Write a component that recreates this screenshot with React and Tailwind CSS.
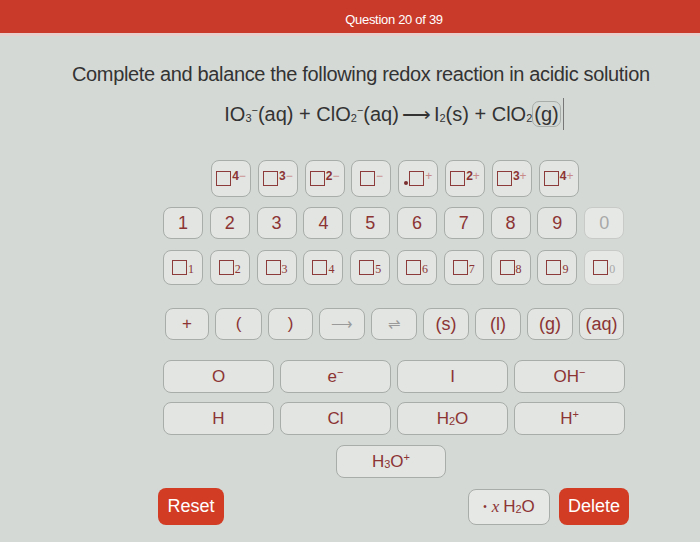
import React from 'react';

const maroon = 'text-[#8c3434]';

// outlined placeholder square used in the charge and subscript keys
function Box() {
  return <span className="inline-block w-[15px] h-[15px] border-[1.5px] border-[#8c3a3a] align-middle" />;
}

function Key({ className = '', children }) {
  return (
    <div
      className={`flex items-center justify-center rounded-[8px] border border-[#a9adaa] bg-[#e2e5e2] ${maroon} ${className}`}
    >
      {children}
    </div>
  );
}

const charges = [
  ['4', '−'],
  ['3', '−'],
  ['2', '−'],
  ['', '−'],
  ['', '+', true],
  ['2', '+'],
  ['3', '+'],
  ['4', '+'],
];

const digits = ['1', '2', '3', '4', '5', '6', '7', '8', '9', '0'];

const states = [
  ['+', 'w-[44px]', 'text-[17px]'],
  ['(', 'w-[47px]', 'text-[17px]'],
  [')', 'w-[45px]', 'text-[17px]'],
  ['⟶', 'w-[46px] text-[#9a9a9a]', 'text-[15px]'],
  ['⇌', 'w-[46px] text-[#9a9a9a]', 'text-[15px]'],
  ['(s)', 'w-[46px]', 'text-[18px]'],
  ['(l)', 'w-[46px]', 'text-[18px]'],
  ['(g)', 'w-[46px]', 'text-[18px]'],
  ['(aq)', 'w-[45px]', 'text-[18px]'],
];

export default function App() {
  return (
    <div
      className="w-[700px] h-[542px] overflow-hidden bg-[#d5d9d6] flex flex-col"
      style={{ fontFamily: '"Liberation Sans", Arial, sans-serif' }}
    >
      {/* header */}
      <div className="h-[36px] bg-[#c93a2b] flex items-center border-b-[3px] border-[#e6cfcc]">
        <div className="ml-[163px] w-[462px] text-center text-white text-[13px] tracking-[-0.3px] pt-[6px]">
          Question 20 of 39
        </div>
      </div>

      {/* prompt */}
      <div className="pl-[72px] mt-[26px] text-[20px] text-[#333] leading-[24px] tracking-[-0.35px]">
        Complete and balance the following redox reaction in acidic solution
      </div>
      <div className="ml-[163px] w-[462px] flex justify-center mt-[10px] text-[20px] text-[#333] leading-[28px]">
        <span className="flex items-center">
          IO<span className="text-[11px] mt-[8px]">3</span>
          <span className="text-[11px] -mt-[8px]">−</span>(aq) + ClO
          <span className="text-[11px] mt-[8px]">2</span>
          <span className="text-[11px] -mt-[8px]">−</span>(aq)
          <span className="mx-[3px] text-[20px]">⟶</span>I
          <span className="text-[11px] mt-[8px]">2</span>(s) + ClO
          <span className="text-[11px] mt-[8px]">2</span>
          <span className="border border-[#a9adaa] rounded-[7px] px-[1px] leading-[24px]">(g)</span>
          <span className="inline-block w-px h-[32px] bg-[#777] ml-[2px]" />
        </span>
      </div>

      {/* keypad */}
      <div className="ml-[163px] w-[462px] mt-[28px] flex flex-col">
        <div className="flex gap-[6.8px] pl-[48px]">
          {charges.map(([n, s, dot], i) => (
            <Key key={i} className="w-[40px] h-[37px]">
              <span className="flex items-start">
                {dot && <span className="w-[4px] h-[4px] rounded-full bg-[#7a2e2e] self-center mr-[1px] mt-[8px]" />}
                <Box />
                <span className="text-[12px] font-bold leading-[12px] -mt-[1px] ml-[1px]">{n}</span>
                <span className="text-[12px] leading-[12px] -mt-[1px] text-[#c98a8a]">{s}</span>
              </span>
            </Key>
          ))}
        </div>

        <div className="flex gap-[6.8px] mt-[10px]">
          {digits.map((d) => (
            <Key
              key={d}
              className={`w-[40px] h-[32px] text-[18px] ${d === '0' ? 'bg-[#e6e8e6] border-[#c7cac7] text-[#a8a8a8]' : ''}`}
            >
              {d}
            </Key>
          ))}
        </div>

        <div className="flex gap-[6.8px] mt-[11px]">
          {digits.map((d) => (
            <Key
              key={d}
              className={`w-[40px] h-[35px] ${d === '0' ? 'bg-[#e6e8e6] border-[#c7cac7]' : ''}`}
            >
              <span className="flex items-end">
                <Box />
                <span
                  className={`text-[12px] leading-[12px] ml-[1px] ${d === '0' ? 'text-[#a8a8a8]' : ''}`}
                  style={{ fontFamily: '"Liberation Serif", serif' }}
                >
                  {d}
                </span>
              </span>
            </Key>
          ))}
        </div>

        <div className="flex gap-[6px] mt-[23px] pl-[2px]">
          {states.map(([t, w, fs]) => (
            <Key key={t} className={`h-[32px] ${w} ${fs}`}>
              {t}
            </Key>
          ))}
        </div>

        <div className="grid grid-cols-4 gap-x-[6px] gap-y-[9px] mt-[20px]">
          <Key className="h-[33px] text-[17px]">O</Key>
          <Key className="h-[33px] text-[17px]">
            e<span className="text-[11px] -mt-[8px]">−</span>
          </Key>
          <Key className="h-[33px] text-[17px]">I</Key>
          <Key className="h-[33px] text-[17px]">
            OH<span className="text-[11px] -mt-[8px]">−</span>
          </Key>
          <Key className="h-[33px] text-[17px]">H</Key>
          <Key className="h-[33px] text-[17px]">Cl</Key>
          <Key className="h-[33px] text-[17px]">
            H<span className="text-[11px] mt-[6px]">2</span>O
          </Key>
          <Key className="h-[33px] text-[17px]">
            H<span className="text-[11px] -mt-[8px]">+</span>
          </Key>
        </div>
        <div className="flex justify-center mt-[10px] pr-[6px]">
          <Key className="w-[110px] h-[33px] text-[17px]">
            H<span className="text-[11px] mt-[6px]">3</span>O
            <span className="text-[11px] -mt-[8px]">+</span>
          </Key>
        </div>
      </div>

      {/* bottom actions */}
      <div className="flex items-center mt-[10px] pl-[158px] pr-[71px]">
        <button className="w-[66px] h-[37px] rounded-[8px] bg-[#d23c24] text-white text-[18px]">Reset</button>
        <div className="flex-1" />
        <Key className="w-[82px] h-[36px] text-[17px] bg-[#e6e8e6]">
          <span className="text-[10px] mr-[5px]">•</span>
          <span className="italic" style={{ fontFamily: '"Liberation Serif", serif' }}>x</span>
          <span className="ml-[4px]">H</span>
          <span className="text-[11px] mt-[6px]">2</span>O
        </Key>
        <button className="ml-[9px] w-[70px] h-[37px] rounded-[8px] bg-[#d23c24] text-white text-[18px]">Delete</button>
      </div>
    </div>
  );
}
